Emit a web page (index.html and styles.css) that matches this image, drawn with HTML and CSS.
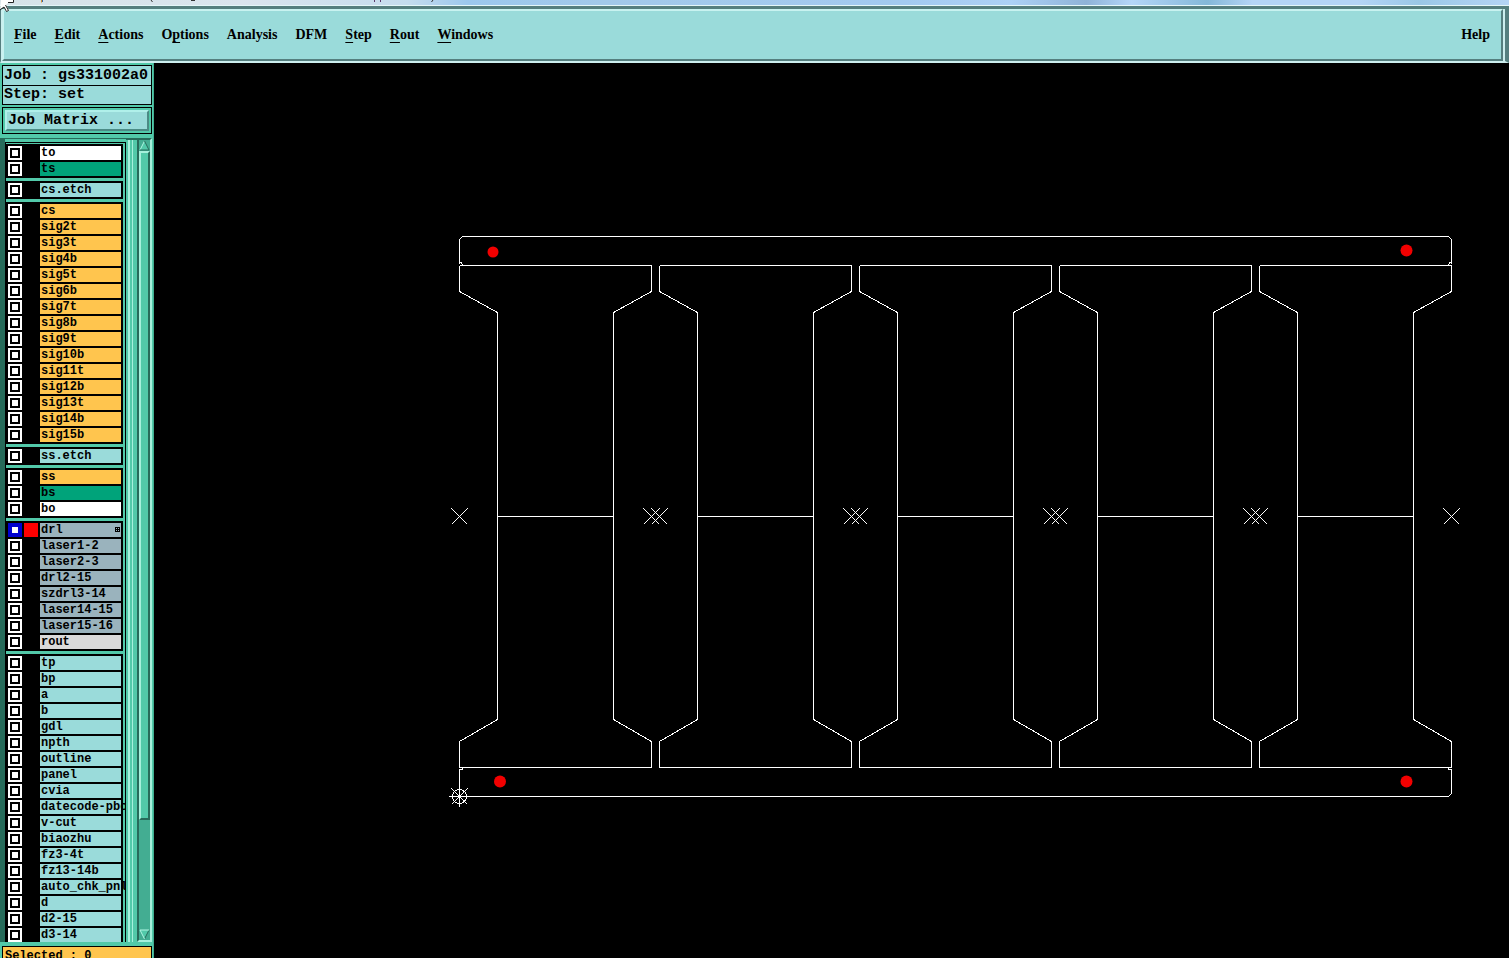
FILE: index.html
```html
<!DOCTYPE html>
<html lang="en">
<head>
<meta charset="utf-8">
<title>Graphic Editor</title>
<link rel="stylesheet" href="styles.css">
</head>
<body>
<div class="titlebar">
  <svg class="cursor" width="440" height="12" viewBox="0 0 440 12" aria-hidden="true">
    <path d="M1 0H14V3H8L6 5L9 10L6 11.500L4 7L0 9Z" fill="#fff"/>
    <path d="M8 2.500H13.500V0M5.500 5L8.500 10.500L6.500 11.500L4 7L0 10" fill="none" stroke="#222"/>
    <path d="M41.500 0V2.500" stroke="#d99536"/><path d="M42.500 0V2" stroke="#3c63a0"/>
    <path d="M151 0L152.500 2M191 .5H195M433 0L431.500 2" fill="none" stroke="#333"/>
    <path d="M374.500 0V2M380.500 0V2" stroke="#5b3a6b"/>
  </svg>
</div>
<header class="menubar">
  <nav class="menus">
    <button class="menu"><u>F</u>ile</button>
    <button class="menu"><u>E</u>dit</button>
    <button class="menu"><u>A</u>ctions</button>
    <button class="menu">O<u>p</u>tions</button>
    <button class="menu">Analysis</button>
    <button class="menu">DFM</button>
    <button class="menu"><u>S</u>tep</button>
    <button class="menu"><u>R</u>out</button>
    <button class="menu"><u>W</u>indows</button>
    <button class="menu help">Help</button>
  </nav>
</header>
<div class="workspace">
  <aside class="sidebar">
    <div class="info">
      <div class="info-line">Job : gs331002a0</div>
      <div class="info-line">Step: set</div>
    </div>
    <div class="matrix"><button class="matrix-button">Job Matrix ...</button></div>
    <div class="layers">
      <div class="viewport"><div class="layer-list" id="layers"></div></div>
      <div class="rail"></div>
      <div class="scrollbar">
        <svg class="arrow" width="11" height="11" viewBox="0 0 11 11" aria-hidden="true"><path d="M5.500 1L10 10H1Z" fill="#52c9a9"/><path d="M1 10L5.500 1" stroke="#b0f5e2"/><path d="M5.500 1L10 10H1" fill="none" stroke="#276b5a"/></svg>
        <div class="track"><div class="thumb"></div></div>
        <svg class="arrow" width="11" height="11" viewBox="0 0 11 11" aria-hidden="true"><path d="M1 1H10L5.500 10Z" fill="#52c9a9"/><path d="M10 1L5.500 10" stroke="#276b5a"/><path d="M10 1H1L5.500 10" fill="none" stroke="#b0f5e2"/></svg>
      </div>
    </div>
    <div class="selected">Selected : 0</div>
  </aside>
  <main class="canvas">
    <svg class="drawing" viewBox="154 63 1355 895" preserveAspectRatio="xMinYMin meet" role="img" aria-label="Panel outline">
      <g id="outline" class="outline">
        <path d="M459.500 263.500V239.500L462.500 236.500H1448.500L1451.500 239.500V263.500M459.500 262.500H461.500L462.500 265.500M1451.500 262.500H1449.500L1448.500 265.500"/>
        <path d="M459.500 796.500V769.500H462.500V767.500M459.500 796.500H1448.500L1451.500 793.500V769.500H1448.500V767.500"/>
        <path d="M459.500 265.500H651.500M659.500 265.500H851.500M859.500 265.500H1051.500M1059.500 265.500H1251.500M1259.500 265.500H1451.500"/>
      </g>
      <g class="origin">
        <circle cx="459.500" cy="796.500" r="7"/>
        <path d="M449 796.500H470M459.500 786V807M451.500 788.500L467.500 804.500M467.500 788.500L451.500 804.500"/>
      </g>
      <g fill="#f20000">
        <circle cx="493" cy="252" r="5.500"/>
        <circle cx="1406.500" cy="250.500" r="6"/>
        <circle cx="500" cy="781.500" r="6"/>
        <circle cx="1406.500" cy="781.500" r="6"/>
      </g>
    </svg>
  </main>
</div>
<script src="app.js"></script>
</body>
</html>
```
FILE: styles.css
```css
* { box-sizing: border-box; }

body {
  margin: 0;
  height: 100vh;
  display: flex;
  flex-direction: column;
  overflow: hidden;
  background: #000;
  color: #000;
}

button {
  font: inherit;
  color: inherit;
  background: none;
  border: 0;
  padding: 0;
}

.titlebar {
  position: relative;
  flex: none;
  height: 6px;
  border-bottom: 1px solid #e4f6f8;
  background: linear-gradient(90deg, #d5e2e8 0, #dbe5ee 16%, #c5dcee 27%, #9cc8ee 31%, #a2c9ea 40%, #a3caf0 60%, #add1f6 67%, #8fb3d8 72%, #b5d6f8 75%, #84b8d8 80%, #b5d5f6 83%, #b5d5f6 90%, #9ac7e6 94%, #b5d5f6 100%);
}

.cursor {
  position: absolute;
  left: 0;
  top: 0;
  z-index: 1;
}

.menubar {
  flex: none;
  border-style: solid;
  border-color: #557f7f #557f7f #cceeee #557f7f;
  border-width: 3px 4px 2px 1px;
  background: #cceeee;
  padding: 0 2px 0 1px;
}

.menus {
  display: flex;
  align-items: center;
  gap: 18px;
  height: 52px;
  padding: 0 11px 0 10px;
  border: 2px solid;
  border-color: #c8f2f0 #557f7f #557f7f #c8f2f0;
  background: #9adbda;
  font: bold 14px/20px "Liberation Serif", serif;
}

.menu u {
  text-underline-offset: 3px;
  text-decoration-thickness: 1px;
}

.help { margin-left: auto; }

.workspace {
  flex: 1;
  min-height: 0;
  display: flex;
}

.sidebar {
  flex: none;
  width: 154px;
  display: flex;
  flex-direction: column;
  padding-top: 2px;
  border-right: 1px solid #43ad92;
  background: #52c9a9;
  font: bold 15px/18px "Liberation Mono", monospace;
  white-space: nowrap;
}

.info {
  margin: 0 1px 0 2px;
  border: 1px solid #000;
  background: #9adbda;
}

.info-line {
  height: 19px;
  line-height: 20px;
  padding-left: 1px;
}

.info-line + .info-line {
  border-top: 1px solid #000;
  line-height: 18px;
}

.matrix {
  margin: 2px 1px 0 2px;
  padding: 2px;
  border: 1px solid #000;
}

.matrix-button {
  display: block;
  width: 100%;
  height: 21px;
  padding-left: 1px;
  border: 2px solid;
  border-color: #b0f0ea #4b8b85 #4b8b85 #b0f0ea;
  background: #9adbda;
  text-align: left;
}

.layers {
  flex: 1;
  min-height: 0;
  display: flex;
  margin-top: 4px;
}

.viewport {
  flex: none;
  width: 126px;
  overflow: hidden;
  padding-top: 3px;
  border-left: 5px solid #276b5a;
  border-top: 1px solid #276b5a;
}

.layer-list {
  display: flex;
  flex-direction: column;
  gap: 3px;
  padding: 1px 2px 0 0;
  border: 1px solid #000;
}

.group {
  padding: 1px 2px 1px 2px;
  background: #000;
}

.row {
  display: flex;
  align-items: center;
  gap: 2px;
  height: 16px;
}

.toggle {
  appearance: none;
  flex: none;
  width: 14px;
  height: 14px;
  margin: 0;
  border: 2px solid #fff;
  background: #fff;
  box-shadow: inset 0 0 0 2px #000;
}

.toggle:checked {
  border-color: #0000d0;
  box-shadow: inset 0 0 0 2px #0000d0;
}

.swatch {
  flex: none;
  width: 14px;
  height: 14px;
}

.swatch.active { background: #f00; }

.name {
  flex: none;
  position: relative;
  width: 81px;
  height: 14px;
  padding-left: 1px;
  font-size: 12px;
  line-height: 14px;
}

.mark {
  position: absolute;
  right: 1px;
  top: 4px;
}

.white { background: #fff; }
.green { background: #00a37a; }
.teal { background: #9adbda; }
.amber { background: #ffc54e; }
.slate { background: #9ab3bd; }
.grey { background: #dadada; }

.rail {
  flex: 1;
  border-top: 2px solid #276b5a;
  background: linear-gradient(90deg, #52c9a9 0 2px, #a6f0dc 2px 4px, #52c9a9 4px 6px, #a6f0dc 6px 7px, #52c9a9 7px);
}

.scrollbar {
  flex: none;
  width: 15px;
  margin-right: 1px;
  display: flex;
  flex-direction: column;
  border: 2px solid;
  border-color: #276b5a #a6f0dc #a6f0dc #276b5a;
  background: #43ad92;
}

.arrow { flex: none; }

.track { flex: 1; }

.thumb {
  height: 86%;
  border: 2px solid;
  border-color: #a6f0dc #276b5a #276b5a #a6f0dc;
  background: #52c9a9;
}

.selected {
  flex: none;
  height: 12px;
  margin: 4px 1px 0 2px;
  overflow: hidden;
  border: 1px solid #000;
  border-bottom: 0;
  padding-left: 2px;
  background: #ffc54e;
  font-size: 12px;
  line-height: 18px;
}

.canvas {
  flex: 1;
  min-width: 0;
  overflow: hidden;
}

.drawing {
  display: block;
  width: 100%;
}

.outline,
.origin {
  fill: none;
  stroke: #fff;
  stroke-width: 1;
  shape-rendering: crispEdges;
}
```
FILE: app.js
```js
const groups = [
  [["to", "white"], ["ts", "green"]],
  [["cs.etch", "teal"]],
  ["cs", "sig2t", "sig3t", "sig4b", "sig5t", "sig6b", "sig7t", "sig8b", "sig9t", "sig10b", "sig11t", "sig12b", "sig13t", "sig14b", "sig15b"].map(n => [n, "amber"]),
  [["ss.etch", "teal"]],
  [["ss", "amber"], ["bs", "green"], ["bo", "white"]],
  [...["drl", "laser1-2", "laser2-3", "drl2-15", "szdrl3-14", "laser14-15", "laser15-16"].map(n => [n, "slate"]), ["rout", "grey"]],
  ["tp", "bp", "a", "b", "gdl", "npth", "outline", "panel", "cvia", "datecode-pbo", "v-cut", "biaozhu", "fz3-4t", "fz13-14b", "auto_chk_pnl", "d", "d2-15", "d3-14"].map(n => [n, "teal"])
];

const mark = '<svg class="mark" width="5" height="5" viewBox="0 0 5 5" aria-hidden="true"><path d="M.5 .5H4.500V4.500H.5ZM2.500 .5V4.500M.5 2.500H4.500" fill="none" stroke="#000" shape-rendering="crispEdges"/></svg>';

document.getElementById("layers").innerHTML = groups.map(rows =>
  '<div class="group">' + rows.map(([name, color]) => {
    const active = name === "drl";
    return `<div class="row"><input class="toggle" type="checkbox" id="l-${name}"${active ? " checked" : ""}><span class="swatch${active ? " active" : ""}"></span><label class="name ${color}" for="l-${name}">${name}${active ? mark : ""}</label></div>`;
  }).join("") + "</div>"
).join("");

let d = "";
const cross = (x, y) => `M${x - 8} ${y - 8}L${x + 8} ${y + 8}M${x + 8} ${y - 8}L${x - 8} ${y + 8}`;
for (let i = 0; i < 5; i++) {
  const l = 459.5 + i * 200, r = l + 192, a = l + 38, b = l + 154;
  d += `M${l} 265.5V291.5L${a} 312.5V719.5L${l} 741.5V767.5H${r}V741.5L${b} 719.5V312.5L${r} 291.5V265.5`;
  d += `M${a} 516.5H${b}` + cross(l, 516.5) + cross(r, 516.5);
}
document.getElementById("outline").insertAdjacentHTML("beforeend", `<path d="${d}"/>`);
```
